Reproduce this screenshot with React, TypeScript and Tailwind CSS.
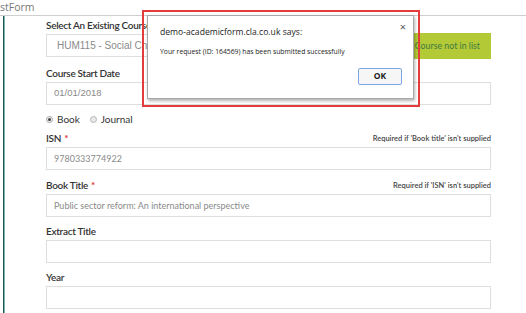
import React from "react";

const lato = { fontFamily: "Lato, 'Open Sans', sans-serif" };

function Label({ text, req, note }: { text: string; req?: boolean; note?: string }) {
  return (
    <div className="flex h-[16px] items-center justify-between pt-[1px]">
      <span className="text-[10px] font-semibold tracking-[-0.3px] text-[#333]">
        {text}
        {req && <span className="ml-[3px] text-[#e2231a]">*</span>}
      </span>
      {note && <span className="text-[7.5px] font-semibold text-[#444]">{note}</span>}
    </div>
  );
}

function Input({ value }: { value?: string }) {
  return (
    <div className="mt-[1px] flex h-[23px] items-center border border-[#dedede] bg-white pl-[7px] text-[9px] text-[#8a8a8a]">
      {value}
    </div>
  );
}

export default function App() {
  return (
    <div className="relative h-[313px] w-[526px] overflow-hidden bg-white" style={lato}>
      {/* top bar */}
      <div
        className="h-[16px] border-b border-[#cfcfcf] pt-[1px] text-[10.5px] leading-[12px] text-[#777]"
        style={{ fontFamily: "'Open Sans', sans-serif" }}
      >
        stForm
      </div>

      <div className="flex">
        <div className="ml-[3px] flex">
          <div className="h-[300px] w-[1px] bg-[#1d5656]" />
          <div className="h-[300px] w-[1px] bg-[#7fb3b3]" />
        </div>

        <div className="ml-[41px] w-[445px] pt-[1px]">
          {/* Select existing course */}
          <Label text="Select An Existing Course" />
          <div className="mt-[1px] flex h-[23px] gap-[8px]">
            <div
              className="flex flex-1 items-center border border-[#dedede] pl-[10px] text-[10px] text-[#8a8a8a]"
              style={{ fontFamily: "'Liberation Sans', Arial, sans-serif" }}
            >
              HUM115 - Social Change and Public Policy
            </div>
            <div className="-mt-[1px] flex h-[26px] w-[150px] items-center justify-end bg-[#b4c936] pr-[11px] text-[8.8px] text-[#3d7a42]">
              Course not in list
            </div>
          </div>

          <div className="mt-[8px]">
            <Label text="Course Start Date" />
            <div
              className="mt-[1px] flex h-[23px] items-center border border-[#dedede] pl-[7px] text-[9.5px] text-[#8a8a8a]"
              style={{ fontFamily: "'Liberation Sans', Arial, sans-serif" }}
            >
              01/01/2018
            </div>
          </div>

          {/* radios */}
          <div className="mt-[7px] flex h-[14px] items-center text-[10px] text-[#333]">
            <span className="flex h-[7px] w-[7px] items-center justify-center rounded-full border border-[#a9a9a9] bg-[#eee]">
              <span className="h-[3px] w-[3px] rounded-full bg-[#444]" />
            </span>
            <span className="ml-[4px]">Book</span>
            <span className="ml-[10px] h-[7px] w-[7px] rounded-full border border-[#b5b5b5] bg-[#e9e9e9]" />
            <span className="ml-[4px]">Journal</span>
          </div>

          <div className="mt-[4px]">
            <Label text="ISN" req note="Required if 'Book title' isn't supplied" />
            <Input value="9780333774922" />
          </div>

          <div className="mt-[7px]">
            <Label text="Book Title" req note="Required if 'ISN' isn't supplied" />
            <Input value="Public sector reform: An international perspective" />
          </div>

          <div className="mt-[6px]">
            <Label text="Extract Title" />
            <Input />
          </div>

          <div className="mt-[6px]">
            <Label text="Year" />
            <Input />
          </div>
        </div>
      </div>

      {/* alert dialog */}
      <div
        className="absolute left-[147px] top-[15px] h-[84px] w-[267px] border border-[#a8a8a8] bg-white shadow-[1px_2px_3px_rgba(0,0,0,0.3)]"
        style={{ fontFamily: "'Open Sans', 'Noto Sans', sans-serif" }}
      >
        <div className="absolute right-[7px] top-[3px] text-[11px] text-[#555]">×</div>
        <div className="absolute left-[12px] top-[10px] text-[8.6px] leading-[12px] text-[#222]">
          demo-academicform.cla.co.uk says:
        </div>
        <div className="absolute left-[12px] top-[31px] text-[6.8px] leading-[10px] text-[#222]">
          Your request (ID: 164569) has been submitted successfully
        </div>
        <div className="absolute left-[210px] top-[52px] flex h-[17px] w-[44px] items-center justify-center rounded-[2px] border border-[#7aa6e8] bg-[#f6f6f6] text-[8.5px] font-bold text-[#222]">
          OK
        </div>
      </div>
      {/* red annotation box */}
      <div className="absolute left-[142px] top-[10px] h-[97px] w-[278px] border-2 border-[#e23c3c]" />
    </div>
  );
}
